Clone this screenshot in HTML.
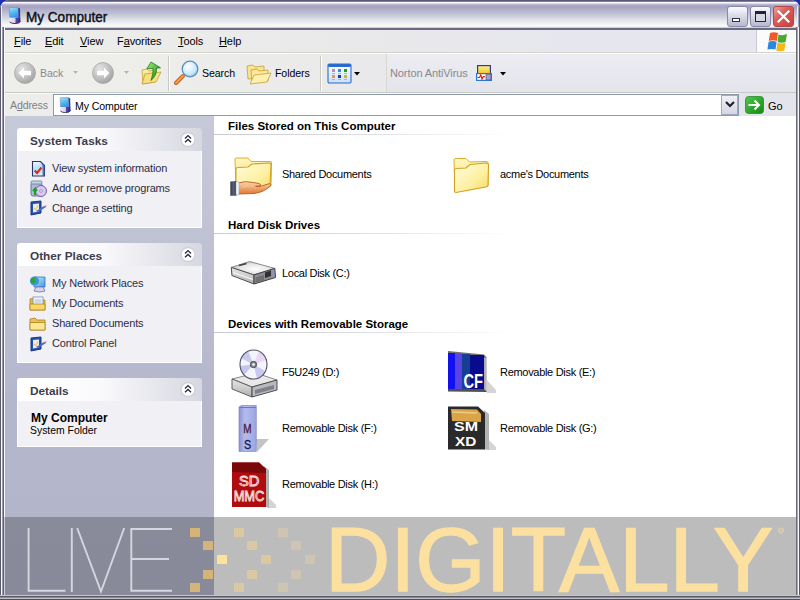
<!DOCTYPE html>
<html><head><meta charset="utf-8">
<style>
*{margin:0;padding:0;box-sizing:border-box}
html,body{width:800px;height:600px;overflow:hidden;background:#1c2eb4;font-family:"Liberation Sans",sans-serif;}
.a{position:absolute}
svg{position:absolute;overflow:visible}
#win{position:absolute;left:0;top:0;width:800px;height:600px;border-radius:9px 9px 0 0;overflow:hidden;background:#c8c8d8}
#title{left:0;top:0;width:800px;height:30px;background:linear-gradient(#56567a 0,#5a5a78 1.4px,#e8e8f4 1.8px,#fcfcff 2.6px,#d8d8e8 3.6px,#aca8c8 5px,#a8a4c4 7.5px,#b2b2ca 10px,#bcc0d4 13px,#d0d2de 17px,#e0e2ea 20px,#eeeff2 23px,#f8f8f4 25px,#f6f6f6 27px,#c8c8d8 27.6px,#6a6a84 28.2px,#6a6a84 29.6px,#e0e0e4 30px)}
#ttext{left:26px;top:9px;font:14.2px "Liberation Sans",sans-serif;-webkit-text-stroke:0.45px #101020;color:#101020;transform-origin:0 0;transform:scaleX(0.955);letter-spacing:0}
.frameL{left:0;top:27px;width:5px;height:573px;background:linear-gradient(90deg,#5a5a6a 0,#5a5a6a 1px,#f8f8ff 1px,#f8f8ff 2px,#9a9aaa 2px,#9a9aaa 3px,#60606e 3px,#60606e 4px,#f8f8ff 4px)}
.frameR{left:796px;top:27px;width:4px;height:573px;background:linear-gradient(90deg,#6a6a7a 0,#6a6a7a 1px,#a8a8b8 1px,#a8a8b8 2px,#f8f8ff 2px,#f8f8ff 3px,#5a5a6a 3px)}
.frameB{left:0;top:595px;width:800px;height:5px;background:linear-gradient(#c4c4ca 0,#c4c4ca 1px,#5a5a66 1px,#5a5a66 2px,#8a8a96 2px,#8a8a96 3px,#c0c0c8 3px,#c0c0c8 4px,#505058 4px)}
#menu{left:5px;top:30px;width:791px;height:23px;background:linear-gradient(90deg,#ededea,#eaeaea 35%,#e6e6ee 70%,#e6e6ee);border-bottom:1px solid #d4d4cc}
.mi{top:35px;font-size:11px;color:#000;letter-spacing:-0.1px}
#tool{left:5px;top:53px;width:791px;height:40px;background:linear-gradient(90deg,#efefea,#ebebeb 35%,#e5e5ed 70%,#e4e4ec);border-top:1px solid #fafaf6;border-bottom:1px solid #c8c8c4}
.tt{font-size:10.6px;color:#000;top:67px;letter-spacing:-0.1px}
.sep{width:1px;background:#c8c8c0;box-shadow:1px 0 0 #fff}
#addr{left:5px;top:93px;width:791px;height:23px;background:linear-gradient(90deg,#ededea,#eaeaea 35%,#e5e5ed 70%,#e4e4ec);border-top:1px solid #fafaf6}
#left{left:5px;top:116px;width:209px;height:480px;background:linear-gradient(#c6cad8,#b4b7cc 60%,#b2b4ca)}
#content{left:214px;top:116px;width:582px;height:480px;background:#fff}
.box{left:17px;width:185px;background:#f0f0f5;border:1px solid #fff;border-top:0}
.bh{left:17px;width:185px;height:23px;border-radius:3px 3px 0 0;background:linear-gradient(90deg,#fff 0,#fafafc 45%,#d6d7e0 100%)}
.bt{font:bold 11.8px "Liberation Sans",sans-serif;color:#3d3d4e}
.ti{font-size:11px;color:#2e2e44;left:52px;letter-spacing:-0.17px}
.ch{font:bold 11.5px "Liberation Sans",sans-serif;color:#000;left:228px}
.cl{left:214px;height:1px;width:300px;background:linear-gradient(90deg,#c8c8d0,#e0e0e8 55%,rgba(255,255,255,0))}
.it{font-size:11px;color:#000;letter-spacing:-0.3px}
#band{left:5px;top:517px;width:791px;height:78px;background:rgba(54,54,56,0.335)}
</style></head><body>
<div id="win">
  <div class="a" id="title"></div>
  <div class="a" style="left:0;top:6px;width:2px;height:22px;background:linear-gradient(90deg,#5a5a78 0,#5a5a78 1px,#f0f0fa 1px)"></div>
  <div class="a" style="left:797px;top:6px;width:3px;height:22px;background:linear-gradient(90deg,#f0f0fa 0,#f0f0fa 1px,#a0a0b8 1px,#a0a0b8 2px,#5a5a78 2px)"></div>
  <!-- title icon -->
  <svg style="left:8px;top:7px" width="13" height="17" viewBox="0 0 12 16">
    <defs><linearGradient id="scr" x1="0" y1="0" x2="0.3" y2="1"><stop offset="0" stop-color="#a8e4fc"/><stop offset="0.5" stop-color="#58bef4"/><stop offset="1" stop-color="#3a98e8"/></linearGradient>
    <linearGradient id="bse" x1="0" y1="0" x2="1" y2="0"><stop offset="0" stop-color="#f4eef8"/><stop offset="0.5" stop-color="#d8d0f0"/><stop offset="0.6" stop-color="#5848b0"/><stop offset="1" stop-color="#2a2a80"/></linearGradient></defs>
    <path d="M1.2 1.5 Q1.2 0.6 2 0.6 L9.5 0.6 L9.8 10 L1.5 10 Z" fill="url(#scr)" stroke="#7890b8" stroke-width="0.6"/>
    <path d="M9.5 0.6 L11.2 1.4 L11.4 10.5 L9.8 10 Z" fill="#303c98"/>
    <path d="M1.3 10 L11.4 10 L11.6 13.5 Q11 15.6 6 15.6 Q1.2 15.6 1.2 13.5 Z" fill="url(#bse)"/>
    <path d="M1.4 14 Q3 15.6 6.5 15.6 Q10.5 15.6 11.6 13.5" stroke="#303050" stroke-width="0.9" fill="none"/>
  </svg>
  <div class="a" id="ttext">My Computer</div>
  <!-- buttons -->
  <div class="a" style="left:727px;top:6px;width:21px;height:21px;border-radius:3px;border:1px solid #8a8aa8;background:linear-gradient(#fbfbff,#dcdcea 45%,#c4c4d8 80%,#b8b8cc)"></div>
  <div class="a" style="left:732px;top:18px;width:8px;height:4px;background:#fff;border:1px solid #30304a"></div>
  <div class="a" style="left:750px;top:6px;width:21px;height:21px;border-radius:3px;border:1px solid #8a8aa8;background:linear-gradient(#fbfbff,#dcdcea 45%,#c4c4d8 80%,#b8b8cc)"></div>
  <div class="a" style="left:755px;top:11px;width:11px;height:11px;background:#d8d8e4;border:1px solid #22223a;border-top-width:3px"></div>
  <div class="a" style="left:773px;top:6px;width:21px;height:21px;border-radius:3px;border:1px solid #b04848;background:linear-gradient(135deg,#f0a0a0,#dc5c58 40%,#c84040 100%)"></div>
  <svg style="left:773px;top:6px" width="21" height="21" viewBox="0 0 21 21"><path d="M5.5 5.5 L15.5 15.5 M15.5 5.5 L5.5 15.5" stroke="#fff" stroke-width="2.2" stroke-linecap="square"/></svg>

  <div class="a" id="menu"></div>
  <div class="a mi" style="left:14px"><u>F</u>ile</div>
  <div class="a mi" style="left:45px"><u>E</u>dit</div>
  <div class="a mi" style="left:80px"><u>V</u>iew</div>
  <div class="a mi" style="left:117px">F<u>a</u>vorites</div>
  <div class="a mi" style="left:178px"><u>T</u>ools</div>
  <div class="a mi" style="left:219px"><u>H</u>elp</div>
  <div class="a" style="left:756px;top:30px;width:40px;height:22px;background:#fbfbfb;border-left:1px solid #c8c8d0"></div>
  <svg style="left:767px;top:31px" width="21" height="20" viewBox="0 0 21 20">
    <path d="M3 2 Q7 0.5 11 2 L9.8 10 Q6 8.6 1.8 10 Z" fill="#f05a28"/>
    <path d="M11.5 3.5 Q15.5 5 20 3 L18.6 11 Q14.5 12.5 10.5 11 Z" fill="#4aaa30"/>
    <path d="M1.6 10.8 Q5.5 9.4 9.6 10.8 L8.5 18.6 Q4.5 17.2 0.4 18.6 Z" fill="#2a88e0"/>
    <path d="M10.4 11.8 Q14.5 13.2 18.5 11.8 L17.4 19.5 Q13.4 20.8 9.3 19.5 Z" fill="#f4b818"/>
  </svg>
  <div class="a" id="tool"></div>
  <!-- back -->
  <svg style="left:14px;top:62px" width="22" height="22" viewBox="0 0 22 22">
    <defs><radialGradient id="gc" cx="0.35" cy="0.3" r="0.8"><stop offset="0" stop-color="#e4e4e4"/><stop offset="0.6" stop-color="#bdbdbd"/><stop offset="1" stop-color="#9a9a9a"/></radialGradient></defs>
    <circle cx="11" cy="11" r="10.5" fill="url(#gc)" stroke="#a8a8a8" stroke-width="0.8"/>
    <path d="M4.5 11 L10 5.5 L10 8.8 L17 8.8 L17 13.2 L10 13.2 L10 16.5 Z" fill="#fff"/>
  </svg>
  <div class="a tt" style="left:40px;color:#8a8a8a">Back</div>
  <svg style="left:73px;top:71px" width="5" height="3" viewBox="0 0 5 3"><path d="M0 0 L5 0 L2.5 3 Z" fill="#b4b4b4"/></svg>
  <svg style="left:92px;top:62px" width="22" height="22" viewBox="0 0 22 22">
    <circle cx="11" cy="11" r="10.5" fill="url(#gc)" stroke="#a8a8a8" stroke-width="0.8"/>
    <path d="M17.5 11 L12 5.5 L12 8.8 L5 8.8 L5 13.2 L12 13.2 L12 16.5 Z" fill="#fff"/>
  </svg>
  <svg style="left:124px;top:71px" width="5" height="3" viewBox="0 0 5 3"><path d="M0 0 L5 0 L2.5 3 Z" fill="#b4b4b4"/></svg>
  <!-- up -->
  <svg style="left:141px;top:61px" width="22" height="24" viewBox="0 0 22 24">
    <defs><linearGradient id="fy" x1="0" y1="0" x2="0" y2="1"><stop offset="0" stop-color="#fff4b8"/><stop offset="1" stop-color="#e8c050"/></linearGradient>
    <linearGradient id="gg" x1="0" y1="0" x2="1" y2="1"><stop offset="0" stop-color="#a0f070"/><stop offset="1" stop-color="#108010"/></linearGradient></defs>
    <path d="M1 9 L6 8 L8 10 L15 9 L14 21 L2 23 Z" fill="url(#fy)" stroke="#c8a030" stroke-width="0.8"/>
    <path d="M1 23 L4 13 L20 11 L15 21 Z" fill="#f8e080" stroke="#c8a030" stroke-width="0.8"/>
    <path d="M10 1 L19.5 6.8 L15.5 7.2 Q16 14 10 19.5 Q12.5 12 12 7.5 L5.8 7.8 Z" fill="url(#gg)" stroke="#107010" stroke-width="0.7"/>
  </svg>
  <div class="a sep" style="left:168px;top:56px;height:35px"></div>
  <!-- search -->
  <svg style="left:173px;top:60px" width="28" height="26" viewBox="0 0 28 26">
    <defs><radialGradient id="lens" cx="0.4" cy="0.35" r="0.7"><stop offset="0" stop-color="#ffffff"/><stop offset="0.7" stop-color="#c8e8f8"/><stop offset="1" stop-color="#90c0e0"/></radialGradient></defs>
    <path d="M3 23 L10 16" stroke="#c06020" stroke-width="4" stroke-linecap="round"/>
    <path d="M3 23 L10 16" stroke="#f0a050" stroke-width="2" stroke-linecap="round"/>
    <circle cx="17" cy="9" r="7.8" fill="url(#lens)" stroke="#5a90c0" stroke-width="1.3"/>
  </svg>
  <div class="a tt" style="left:202px">Search</div>
  <!-- folders -->
  <svg style="left:246px;top:63px" width="26" height="22" viewBox="0 0 26 22">
    <path d="M1 3 L7 2 L9 4 L18 3 L18 14 L2 16 Z" fill="#f8e498" stroke="#c8a030" stroke-width="0.8"/>
    <path d="M5 7 L11 6 L13 8 L22 7 L22 18 L6 20 Z" fill="#fce8a0" stroke="#c8a030" stroke-width="0.8"/>
    <path d="M4 21 L8 12 L25 10 L21 19 Z" fill="#fff0b0" stroke="#c8a030" stroke-width="0.8"/>
  </svg>
  <div class="a tt" style="left:275px">Folders</div>
  <div class="a sep" style="left:320px;top:56px;height:35px"></div>
  <!-- views -->
  <svg style="left:327px;top:63px" width="25" height="21" viewBox="0 0 25 21">
    <defs><linearGradient id="vw" x1="0" y1="0" x2="0" y2="1"><stop offset="0" stop-color="#ffffff"/><stop offset="1" stop-color="#c8e0f8"/></linearGradient></defs>
    <rect x="1" y="1" width="23" height="19" rx="1.2" fill="url(#vw)" stroke="#2a6ad0" stroke-width="1.1"/>
    <rect x="1" y="1" width="23" height="3" rx="1.5" fill="#2a6ad0"/>
    <rect x="5" y="6" width="3" height="3" fill="#b090c0"/><rect x="11" y="6" width="3" height="3" fill="#3090e0"/><rect x="17" y="6" width="3" height="3" fill="#20a020"/>
    <rect x="5" y="12" width="3" height="3" fill="#f09060"/><rect x="11" y="12" width="3" height="3" fill="#1840a0"/><rect x="17" y="12" width="3" height="3" fill="#d8b030"/>
    <path d="M5 10.5 h3 M11 10.5 h3 M17 10.5 h3 M5 16.5 h3 M11 16.5 h3 M17 16.5 h3" stroke="#a0a8b8" stroke-width="0.8"/>
  </svg>
  <svg style="left:354px;top:72px" width="6" height="4" viewBox="0 0 6 4"><path d="M0 0 L6 0 L3 3.5 Z" fill="#000"/></svg>
  <div class="a" style="left:386px;top:54px;width:410px;height:38px;background:linear-gradient(#ececf2,#e4e4ec);border-left:1px solid #d8d8d0"></div>
  <div class="a tt" style="left:390px;color:#888890;font-size:11px;letter-spacing:-0.1px">Norton AntiVirus</div>
  <svg style="left:475px;top:64px" width="18" height="18" viewBox="0 0 18 18">
    <defs><linearGradient id="nsc" x1="0" y1="0" x2="0" y2="1"><stop offset="0" stop-color="#f8f0a0"/><stop offset="1" stop-color="#f0c818"/></linearGradient></defs>
    <rect x="2.6" y="1.6" width="12.8" height="8.4" fill="url(#nsc)" stroke="#3a3a80" stroke-width="1.2"/>
    <rect x="1.6" y="9.6" width="14.8" height="6.8" fill="#fff" stroke="#2a78d8" stroke-width="1.2"/>
    <rect x="11" y="10.2" width="4.8" height="5.6" fill="#a0a0cc" stroke="#505090" stroke-width="0.6"/>
    <path d="M2.5 13.5 L4.5 13.5 L5.8 10.8 L7 15.2 L8.3 12.5 L10.3 13" stroke="#e01818" stroke-width="1.1" fill="none"/>
  </svg>
  <svg style="left:500px;top:72px" width="6" height="4" viewBox="0 0 6 4"><path d="M0 0 L6 0 L3 3.5 Z" fill="#000"/></svg>
  <div class="a" id="addr"></div>
  <div class="a" style="left:10px;top:99px;font-size:10.6px;color:#808080;letter-spacing:-0.15px"><span>A<u>d</u>dress</span></div>
  <div class="a" style="left:53px;top:94px;width:686px;height:22px;background:#fff;border:1px solid #8c9aac"></div>
  <svg style="left:59px;top:97px" width="12" height="16" viewBox="0 0 12 16">
    <path d="M1.2 1.5 Q1.2 0.6 2 0.6 L9.5 0.6 L9.8 10 L1.5 10 Z" fill="url(#scr)" stroke="#7890b8" stroke-width="0.6"/>
    <path d="M9.5 0.6 L11.2 1.4 L11.4 10.5 L9.8 10 Z" fill="#303c98"/>
    <path d="M1.3 10 L11.4 10 L11.6 13.5 Q11 15.6 6 15.6 Q1.2 15.6 1.2 13.5 Z" fill="url(#bse)"/>
    <path d="M1.4 14 Q3 15.6 6.5 15.6 Q10.5 15.6 11.6 13.5" stroke="#303050" stroke-width="0.9" fill="none"/>
  </svg>
  <div class="a" style="left:75px;top:100px;font-size:10.6px;color:#000;letter-spacing:-0.1px">My Computer</div>
  <div class="a" style="left:721px;top:95px;width:17px;height:20px;border:1.5px solid #a0a8c4;background:linear-gradient(#f0f0f6,#d4d6e4)"></div>
  <svg style="left:725px;top:101px" width="10" height="7" viewBox="0 0 10 7"><path d="M1 1 L5 5 L9 1" stroke="#202030" stroke-width="2.2" fill="none"/></svg>
  <div class="a" style="left:739px;top:93px;width:57px;height:23px;background:#e4e4ec"></div>
  <svg style="left:745px;top:96px" width="19" height="18" viewBox="0 0 19 18">
    <defs><linearGradient id="go" x1="0" y1="0" x2="1" y2="1"><stop offset="0" stop-color="#50c850"/><stop offset="1" stop-color="#108a10"/></linearGradient></defs>
    <rect x="0.5" y="0.5" width="18" height="17" rx="3" fill="url(#go)" stroke="#2a8a2a" stroke-width="0.8"/>
    <path d="M3.5 9 L14 9 M9.5 4.5 L14 9 L9.5 13.5" stroke="#fff" stroke-width="2" fill="none"/>
  </svg>
  <div class="a" style="left:768px;top:100px;font-size:11px;color:#000">Go</div>
  <div class="a" id="left"></div>
  <div class="a" id="content"></div>

  <!-- System Tasks -->
  <div class="a bh" style="top:128px"></div>
  <div class="a box" style="top:151px;height:77px"></div>
  <div class="a bt" style="left:30px;top:134px">System Tasks</div>
  <svg style="left:180px;top:132px" width="16" height="16" viewBox="0 0 16 16"><circle cx="8" cy="7.5" r="7" fill="#fff" stroke="#cfd0da" stroke-width="1.4"/><path d="M5 6.4 L8 3.6 L11 6.4 M5 10.2 L8 7.4 L11 10.2" stroke="#2a2a3e" stroke-width="1.35" fill="none"/></svg>
  <svg style="left:30px;top:160px" width="17" height="18" viewBox="0 0 17 18">
    <defs><linearGradient id="vsi" x1="0" y1="0" x2="0.3" y2="1"><stop offset="0" stop-color="#f8fcff"/><stop offset="0.5" stop-color="#b8e0fa"/><stop offset="1" stop-color="#d8ecfc"/></linearGradient></defs>
    <path d="M2.5 1.5 L10.5 1.5 L14.5 5.5 L14.5 16 L2.5 16 Z" fill="url(#vsi)" stroke="#2e3660" stroke-width="1.1"/>
    <path d="M10.5 1.5 L14.5 5.5 L14.5 16 L12.5 16 L12.5 5.5 Z" fill="#3a60a8" opacity="0.85"/>
    <path d="M4.8 10.5 L7 13 L11.5 7.5" stroke="#e02a20" stroke-width="2.2" fill="none"/>
  </svg>
  <div class="a ti" style="top:162px">View system information</div>
  <svg style="left:29px;top:180px" width="19" height="18" viewBox="0 0 19 18">
    <rect x="2" y="3" width="11" height="13" rx="2" fill="#a8bcd8" stroke="#6878a0" stroke-width="1"/>
    <rect x="2" y="1" width="11" height="3" rx="1" fill="#c8d4e8" stroke="#6878a0" stroke-width="0.8"/>
    <circle cx="12" cy="11" r="5.5" fill="#d8c8f0" stroke="#7060a8" stroke-width="1"/>
    <circle cx="12" cy="11" r="1.3" fill="#fff" stroke="#7060a8" stroke-width="0.6"/>
    <path d="M6 15 L6 9 L4 11 M6 9 L8 11" stroke="#20a020" stroke-width="2" fill="none"/>
  </svg>
  <div class="a ti" style="top:182px">Add or remove programs</div>
  <svg style="left:29px;top:200px" width="18" height="17" viewBox="0 0 18 17">
    <path d="M2 2 L12 1 L12 13 L2 15 Z" fill="#2850b0" stroke="#183880" stroke-width="1"/>
    <path d="M4 4 L10 3.5 L10 11.5 L4 12.5 Z" fill="#eeeede"/><path d="M5 8 L6.5 10 L9 5.5" stroke="#d8c070" stroke-width="1" fill="none"/>
    <path d="M7 11 L15 6 L17 7 L9 12 Z" fill="#4a6ad0"/>
    <path d="M15 6 L17 7 L17.5 5.5 Z" fill="#e05020"/>
  </svg>
  <div class="a ti" style="top:202px">Change a setting</div>

  <!-- Other Places -->
  <div class="a bh" style="top:243px"></div>
  <div class="a box" style="top:266px;height:97px"></div>
  <div class="a bt" style="left:30px;top:249px">Other Places</div>
  <svg style="left:180px;top:247px" width="16" height="16" viewBox="0 0 16 16"><circle cx="8" cy="7.5" r="7" fill="#fff" stroke="#cfd0da" stroke-width="1.4"/><path d="M5 6.4 L8 3.6 L11 6.4 M5 10.2 L8 7.4 L11 10.2" stroke="#2a2a3e" stroke-width="1.35" fill="none"/></svg>
  <svg style="left:29px;top:275px" width="18" height="18" viewBox="0 0 18 18">
    <defs><linearGradient id="ms" x1="0" y1="0" x2="1" y2="1"><stop offset="0" stop-color="#d0f0ff"/><stop offset="1" stop-color="#3898e8"/></linearGradient></defs>
    <path d="M5 2 L16 2 L16 12 L5 12 Z" fill="url(#ms)" stroke="#4070b8" stroke-width="0.8"/>
    <path d="M7 12 L14 12 L16 16 Q11 18 5 16 Z" fill="#d8d4ec" stroke="#7070a8" stroke-width="0.8"/>
    <circle cx="5.5" cy="6" r="4.6" fill="#3a9ad8"/>
    <path d="M2 4 Q4 2 6 3 Q5 5 7 6 Q6 8 4 9 Q2 8 1.5 6 Z" fill="#30a040"/>
  </svg>
  <div class="a ti" style="top:277px">My Network Places</div>
  <svg style="left:29px;top:295px" width="18" height="17" viewBox="0 0 18 17">
    <path d="M1 4 L6 3 L8 5 L16 5 L16 15 L1 15 Z" fill="#e8b840" stroke="#b08020" stroke-width="0.8"/>
    <rect x="4" y="2" width="10" height="10" fill="#f4f8ff" stroke="#7090c0" stroke-width="0.8"/>
    <path d="M5.5 5 h7 M5.5 7 h7" stroke="#90a8d0" stroke-width="0.8"/>
    <path d="M1 9 L16 9 L16 15 L1 15 Z" fill="#f8d868" stroke="#b08020" stroke-width="0.8"/>
  </svg>
  <div class="a ti" style="top:297px">My Documents</div>
  <svg style="left:29px;top:316px" width="18" height="16" viewBox="0 0 18 16">
    <path d="M1 3 L6 2 L8 4 L16 4 L16 14 L1 14 Z" fill="#e8c050" stroke="#b08020" stroke-width="0.8"/>
    <path d="M1 6.5 L16 6.5 L16 14 L1 14 Z" fill="#fce890" stroke="#b08020" stroke-width="0.8"/>
  </svg>
  <div class="a ti" style="top:317px">Shared Documents</div>
  <svg style="left:29px;top:336px" width="18" height="17" viewBox="0 0 18 17">
    <path d="M2 2 L12 1 L12 13 L2 15 Z" fill="#2850b0" stroke="#183880" stroke-width="1"/>
    <path d="M4 4 L10 3.5 L10 11.5 L4 12.5 Z" fill="#eeeede"/><path d="M5 8 L6.5 10 L9 5.5" stroke="#d8c070" stroke-width="1" fill="none"/>
    <path d="M7 11 L15 6 L17 7 L9 12 Z" fill="#4a6ad0"/>
    <path d="M15 6 L17 7 L17.5 5.5 Z" fill="#e05020"/>
  </svg>
  <div class="a ti" style="top:337px">Control Panel</div>

  <!-- Details -->
  <div class="a bh" style="top:378px"></div>
  <div class="a box" style="top:401px;height:46px"></div>
  <div class="a bt" style="left:30px;top:384px">Details</div>
  <svg style="left:180px;top:382px" width="16" height="16" viewBox="0 0 16 16"><circle cx="8" cy="7.5" r="7" fill="#fff" stroke="#cfd0da" stroke-width="1.4"/><path d="M5 6.4 L8 3.6 L11 6.4 M5 10.2 L8 7.4 L11 10.2" stroke="#2a2a3e" stroke-width="1.35" fill="none"/></svg>
  <div class="a" style="left:31px;top:411px;font:bold 12px 'Liberation Sans',sans-serif;color:#000">My Computer</div>
  <div class="a" style="left:30px;top:425px;font-size:10.4px;color:#000">System Folder</div>
  <!-- content -->
  <div class="a ch" style="top:120px">Files Stored on This Computer</div>
  <div class="a cl" style="top:134px"></div>
  <svg style="left:226px;top:152px" width="50" height="48" viewBox="0 0 50 48">
    <defs>
      <linearGradient id="fb" x1="0" y1="0" x2="0" y2="1"><stop offset="0" stop-color="#fff6c0"/><stop offset="1" stop-color="#f6dc70"/></linearGradient>
      <linearGradient id="ff" x1="0" y1="0" x2="1" y2="1"><stop offset="0" stop-color="#fffce0"/><stop offset="0.6" stop-color="#fdf0a0"/><stop offset="1" stop-color="#f4d860"/></linearGradient>
      <linearGradient id="hand" x1="0" y1="0" x2="0" y2="1"><stop offset="0" stop-color="#fcd8b0"/><stop offset="1" stop-color="#e07830"/></linearGradient>
    </defs>
    <path d="M9 7 Q9 6 11 6 L22 6 L25 9.5 L44 9.5 Q46 9.5 45.5 11 L45 34 L10 37 Z" fill="url(#fb)" stroke="#dcae30" stroke-width="1"/>
    <path d="M10 17 Q10 15.5 12 15.5 L22 15 L26 12 L43 11 Q45 11 45 13 L44 34 Q44 35 42 35.5 L11 40 Q10 40 10 38 Z" fill="url(#ff)" stroke="#d4a020" stroke-width="1.1"/>
    <path d="M12 31 Q20 28.5 27 30.5 L33 31.5 Q36 32.5 34 34 L28 34.5 Q36 35 42 32 Q45.5 31 44.5 33.5 Q39 40 28 41.5 L12 42 Z" fill="url(#hand)" stroke="#b85a20" stroke-width="0.9"/>
    <path d="M16 35 Q24 33 30 35" stroke="#f8c090" stroke-width="1" fill="none"/>
    <defs><linearGradient id="slv" x1="0" y1="0" x2="1" y2="0"><stop offset="0" stop-color="#303848"/><stop offset="0.5" stop-color="#5a6070"/><stop offset="1" stop-color="#30384a"/></linearGradient></defs>
    <path d="M4.3 29.5 L10.5 29 L10.5 43.7 L4.3 43.7 Z" fill="url(#slv)"/>
    <path d="M10 29.5 L13 30 L13 42.5 L10 43 Z" fill="#f4f4f8" stroke="#9098a8" stroke-width="0.5"/>
  </svg>
  <div class="a it" style="left:282px;top:168px">Shared Documents</div>
  <svg style="left:444px;top:152px" width="50" height="48" viewBox="0 0 50 48">
    <path d="M10 8 Q10 6.5 12 6.5 L22 6.5 L25.5 10 L42 9.5 Q44 9.5 44 11 L44 34 L11 40 Z" fill="url(#fb)" stroke="#dcae30" stroke-width="1"/>
    <path d="M10.5 18 Q10.5 16.5 12.5 16.5 L22 16 L26 12.5 L42 11 Q44.5 11 44.5 13 L44 33.5 Q44 34.5 42 35 L12 40.5 Q10.5 40.5 10.5 39 Z" fill="url(#ff)" stroke="#d4a020" stroke-width="1.1"/>
  </svg>
  <div class="a it" style="left:500px;top:168px">acme's Documents</div>

  <div class="a ch" style="top:219px">Hard Disk Drives</div>
  <div class="a cl" style="top:233px"></div>
  <svg style="left:226px;top:250px" width="56" height="44" viewBox="0 0 56 44">
    <defs><radialGradient id="hdt" cx="0.55" cy="0.55" r="0.6"><stop offset="0" stop-color="#ffffff"/><stop offset="0.6" stop-color="#e4e4e4"/><stop offset="1" stop-color="#b8b8b8"/></radialGradient>
    <linearGradient id="hdf" x1="0" y1="0" x2="0" y2="1"><stop offset="0" stop-color="#e8e8e8"/><stop offset="1" stop-color="#b0b0b0"/></linearGradient>
    <linearGradient id="hdr" x1="0" y1="0" x2="1" y2="0"><stop offset="0" stop-color="#909090"/><stop offset="0.7" stop-color="#8a8a94"/><stop offset="1" stop-color="#9898c8"/></linearGradient></defs>
    <path d="M5.3 17.4 L23.5 11.5 L48.8 18.4 L28 24.9 Z" fill="url(#hdt)" stroke="#808080" stroke-width="0.9"/>
    <path d="M5.3 17.4 L28 24.9 L28 34 L5.9 25.5 Z" fill="url(#hdf)" stroke="#505050" stroke-width="1"/>
    <path d="M28 24.9 L48.8 18.4 L49.5 27.5 L28 34 Z" fill="url(#hdr)" stroke="#404040" stroke-width="1"/>
    <path d="M7 22.5 L27 29.5" stroke="#f8f8f8" stroke-width="1.3"/>
    <path d="M13 15.6 L20.5 13.5" stroke="#404040" stroke-width="1.6"/>
    <path d="M39 22.5 L45 20.5 L45 26 L39 28 Z" fill="#303030"/>
    <path d="M29.5 27.5 L38 25 L38 30.5 L29.5 33 Z" fill="#707070"/>
  </svg>
  <div class="a it" style="left:282px;top:267px">Local Disk (C:)</div>

  <div class="a ch" style="top:318px">Devices with Removable Storage</div>
  <div class="a cl" style="top:332px"></div>
  <svg style="left:226px;top:344px" width="56" height="56" viewBox="0 0 56 56">
    <defs><linearGradient id="cd" x1="0" y1="0" x2="1" y2="1"><stop offset="0" stop-color="#f8f8ff"/><stop offset="0.35" stop-color="#c8c8f0"/><stop offset="0.55" stop-color="#f4e8f8"/><stop offset="0.8" stop-color="#c0c4ec"/><stop offset="1" stop-color="#e8e8f8"/></linearGradient></defs>
    <path d="M6 35 L30 29 L51 36 L26 43 Z" fill="#e8e8e8" stroke="#707070" stroke-width="0.8"/>
    <path d="M6 35 L26 43 L26 53 L6 45 Z" fill="url(#hdf)" stroke="#505050" stroke-width="0.9"/>
    <path d="M26 43 L51 36 L51 46 L26 53 Z" fill="#b8b8c0" stroke="#404040" stroke-width="0.9"/>
    <path d="M29 46 L48 41 L48 45 L29 50 Z" fill="#808088"/>
    <ellipse cx="27.5" cy="20.5" rx="13.5" ry="14.5" fill="#f4f4fc"/>
    <path d="M27.5 20.5 L14.5 14 A13.5 14.5 0 0 1 22 7 Z" fill="#c8c8f0"/>
    <path d="M27.5 20.5 L14 22 A13.5 14.5 0 0 0 18 31 Z" fill="#c4c4ee"/>
    <path d="M27.5 20.5 L33 7 A13.5 14.5 0 0 1 40.5 16 Z" fill="#e8d8f4"/>
    <path d="M27.5 20.5 L39 27 A13.5 14.5 0 0 1 31 34.5 Z" fill="#c8c8f0"/>
    <ellipse cx="27.5" cy="20.5" rx="13.5" ry="14.5" fill="none" stroke="#505060" stroke-width="1.1"/>
    <circle cx="27.5" cy="20.5" r="3.2" fill="#808088" stroke="#404048" stroke-width="0.8"/>
    <circle cx="27.5" cy="20.5" r="1.3" fill="#fff"/>
  </svg>
  <div class="a it" style="left:282px;top:366px">F5U249 (D:)</div>
  <svg style="left:440px;top:344px" width="56" height="56" viewBox="0 0 56 56">
    <defs><linearGradient id="cfs" x1="0" y1="0" x2="1" y2="0"><stop offset="0" stop-color="#a0a0a0"/><stop offset="1" stop-color="#d0d0d0"/></linearGradient></defs>
    <path d="M46 35 L56 46 L56 49 L47 49 Z" fill="#d4d4d4"/>
    <path d="M44 12 L47 14 L47 48 L44 47 Z" fill="url(#cfs)"/>
    <path d="M8 7 L44 10.5 L47 14 L8 10 Z" fill="#707070"/>
    <rect x="8" y="9" width="7" height="36" fill="#1010f0"/>
    <rect x="15" y="9.5" width="7" height="35.5" fill="#5a44e0"/>
    <rect x="22" y="10" width="8" height="35" fill="#163e94"/>
    <rect x="30" y="11" width="14" height="34" fill="#0a0a8e"/>
    <path d="M8 45 L44 45 L47 48 L8 47.5 Z" fill="#505050"/>
    <g transform="translate(33.2 44) scale(0.7 1)"><text x="0" y="0" text-anchor="middle" font-family="Liberation Sans" font-weight="bold" font-size="21" fill="#fff">CF</text></g>
  </svg>
  <div class="a it" style="left:500px;top:366px">Removable Disk (E:)</div>
  <svg style="left:226px;top:400px" width="56" height="56" viewBox="0 0 56 56">
    <defs><linearGradient id="msg" x1="0" y1="0" x2="1" y2="0"><stop offset="0" stop-color="#8a92d4"/><stop offset="0.35" stop-color="#b4bcee"/><stop offset="1" stop-color="#9ca4e0"/></linearGradient></defs>
    <path d="M30 39 L43 39 L31 52 Z" fill="#c4c4c4"/>
    <path d="M13 7 L15.5 5.5 L30.3 5.5 L30.3 51.4 L13 51.4 Z" fill="url(#msg)" stroke="#8088c8" stroke-width="0.7"/>
    <path d="M13.5 7.5 L30 7.5" stroke="#7078b8" stroke-width="1"/>
    <g transform="translate(21.5 33.3) scale(0.78 1)"><text x="0" y="0" text-anchor="middle" font-family="Liberation Sans" font-size="12.8" fill="#4a1838" stroke="#4a1838" stroke-width="0.3">M</text></g>
    <g transform="translate(21.5 48.5) scale(0.9 1)"><text x="0" y="0" text-anchor="middle" font-family="Liberation Sans" font-size="12" fill="#141848" stroke="#141848" stroke-width="0.3">S</text></g>
  </svg>
  <div class="a it" style="left:282px;top:422px">Removable Disk (F:)</div>
  <svg style="left:440px;top:400px" width="56" height="56" viewBox="0 0 56 56">
    <path d="M47 38 L56 47 L56 50 L48 50 Z" fill="#d4d4d4"/>
    <path d="M44 10 L49 14 L49 50 L45 49.5 Z" fill="#b4b4b4"/>
    <path d="M8 6.5 L38 6.5 L45 13 L45 49.5 L8 49.5 Z" fill="#2a2a2a"/>
    <path d="M11 9 L37 9.5 L41 14 L41 22 L12 21 Z" fill="#dca448"/>
    <path d="M12 12 L37 13" stroke="#f0cc88" stroke-width="1.6"/>
    <g transform="translate(26 31.3) scale(1.25 1)"><text x="0" y="0" text-anchor="middle" font-family="Liberation Sans" font-weight="bold" font-size="12.8" fill="#fff">SM</text></g>
    <g transform="translate(25.6 46) scale(1.2 1)"><text x="0" y="0" text-anchor="middle" font-family="Liberation Sans" font-weight="bold" font-size="12.8" fill="#fff">XD</text></g>
  </svg>
  <div class="a it" style="left:500px;top:422px">Removable Disk (G:)</div>
  <svg style="left:226px;top:456px" width="56" height="56" viewBox="0 0 56 56">
    <path d="M41 40 L50 49 L50 52 L42 52 Z" fill="#d4d4d4"/>
    <path d="M38 10 L43 14 L43 52 L40 51 Z" fill="#b0b0b0"/>
    <path d="M6 6.5 L33 6.5 L40 13 L40 51 L6 51 Z" fill="#b00c10"/>
    <path d="M6 6.5 L33 6.5 L40 13 L40 17 L6 16 Z" fill="#7a0808"/>
    <g transform="translate(23.2 30.2) scale(1.05 1)"><text x="0" y="0" text-anchor="middle" font-family="Liberation Sans" font-size="14" fill="#b82020" stroke="#fff4f4" stroke-width="0.75">SD</text></g>
    <g transform="translate(23 44.5) scale(0.92 1)"><text x="0" y="0" text-anchor="middle" font-family="Liberation Sans" font-size="14" fill="#b82020" stroke="#fff4f4" stroke-width="0.75">MMC</text></g>
  </svg>
  <div class="a it" style="left:282px;top:478px">Removable Disk (H:)</div>
  <div class="a" id="band"></div>
  <div class="a frameL"></div>
  <div class="a frameR"></div>
  <div class="a frameB"></div>
  <div class="a" style="left:4px;top:517px;width:1px;height:78px;background:#d0d0d8"></div>
  <svg style="left:0;top:517px" width="800" height="83" viewBox="0 517 800 83">
    <g stroke="#d6d6e0" stroke-width="1.9" fill="none" stroke-linecap="butt">
      <path d="M28.6 528 L28.6 590.8 L65.5 590.8"/>
      <path d="M71.8 528 L71.8 592"/>
      <path d="M77.2 528 L101 591.5 L124.2 528"/>
      <path d="M172 529 L131.3 529 L131.3 590.8 L172 590.8 M131.3 559 L169 559"/>
    </g>
    <g>
      <rect x="190" y="528" width="10" height="9" fill="#d4b478"/>
      <rect x="203" y="541" width="10" height="9" fill="#d4b478"/>
      <rect x="217" y="555" width="10" height="9" fill="#fce29c"/>
      <rect x="203" y="570" width="10" height="9" fill="#d4b478"/>
      <rect x="190" y="583" width="10" height="9" fill="#d4b478"/>
      <rect x="234" y="528" width="10" height="9" fill="#dac8a2"/>
      <rect x="247" y="541" width="10" height="9" fill="#dac8a2"/>
      <rect x="261" y="555" width="10" height="9" fill="#dac8a2"/>
      <rect x="247" y="570" width="10" height="9" fill="#dac8a2"/>
      <rect x="234" y="583" width="10" height="9" fill="#dac8a2"/>
      <rect x="278" y="528" width="10" height="9" fill="#cec4b2"/>
      <rect x="291" y="541" width="10" height="9" fill="#cec4b2"/>
      <rect x="305" y="555" width="10" height="9" fill="#cec4b2"/>
      <rect x="291" y="570" width="10" height="9" fill="#cec4b2"/>
      <rect x="278" y="583" width="10" height="9" fill="#cec4b2"/>
    </g>
    <text x="325" y="590.6" font-family="Liberation Sans" font-size="90.5" fill="#fce0a0" stroke="#fce0a0" stroke-width="1.3" letter-spacing="-0.1">DIGITALLY</text>
    <circle cx="781" cy="530.5" r="3" fill="#d6ccb2"/><circle cx="781" cy="530.5" r="1.2" fill="#ccc0a4"/>
  </svg>
</div>
</body></html>
